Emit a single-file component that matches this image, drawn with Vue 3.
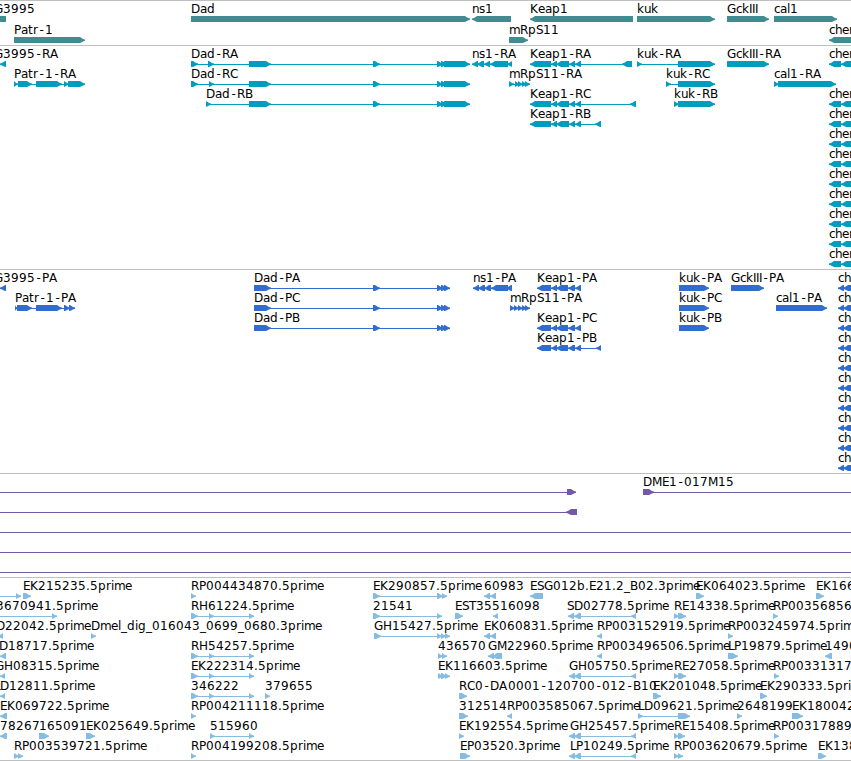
<template>
  <div class="browser">
    <section v-for="track in tracks" :key="track.name" class="track" :class="track.name">
      <svg class="canvas" width="851" :height="track.height">
        <g
          v-for="(f, i) in track.features"
          :key="i"
          :transform="`translate(0 ${f.row * track.pitch})`"
        >
          <rect
            v-if="f.line"
            class="shape"
            :x="f.line[0]"
            y="18"
            :width="f.line[1] - f.line[0]"
            height="1"
          />
          <path v-for="(e, j) in f.exons" :key="j" class="shape" :d="exonPath(e, f.strand)" />
          <text v-if="f.label" class="label" y="12" :x="charPositions(f.label, f.x)">{{ f.label }}</text>
        </g>
      </svg>
    </section>
  </div>
</template>

<script setup>
// advance width of each character, in whole pixels
const widths = {
  A: 9, B: 8, C: 8, D: 9, E: 7, G: 9, H: 9, I: 3, K: 8, L: 6, M: 10, P: 7, R: 8, S: 7, T: 7,
  a: 7, b: 8, c: 6, d: 8, e: 7, g: 8, h: 7, i: 3, k: 7, l: 3, m: 11, n: 7, p: 8, r: 5, s: 6, t: 5, u: 7,
  '-': 7, '.': 4, _: 6,
}

function charPositions(label, start) {
  let x = start
  return [...label]
    .map((c) => {
      // hyphens sit in the middle of their cell
      const pos = c === '-' ? x + 1.5 : x
      x += widths[c] || 8
      return pos
    })
    .join(' ')
}

function exonPath([a, b], strand) {
  const tip = Math.min(5, b - a)
  // s points from the tip back into the exon
  const s = strand < 0 ? 1 : -1
  const head = strand < 0 ? a : b
  const tail = strand < 0 ? b : a
  return `M${tail} 15H${head + s * tip}L${head + s * 2} 17L${head} 17.6V18.8L${head + s * 2} 19.4L${head + s * tip} 21H${tail}Z`
}

function feature(row, x, label, strand, exons) {
  const line = exons.length > 1 ? [exons[0][0], exons[exons.length - 1][1]] : null
  return { row, x, label, strand, exons, line }
}

const dadEnd = [[249, 271], [373, 380], [437, 443], [441, 447], [444, 470]]
const dadProtein = [[254, 271], [373, 380], [437, 443], [441, 447], [444, 450]]
const keap = [[530, 551], [551, 557], [556, 569], [569, 575], [575, 581]]
const keapProtein = [[537, 551], [551, 557], [556, 568], [568, 575], [575, 581]]
const dadEst = [[191, 198], [209, 214], [249, 254]]
const keapEst = [[569, 575], [574, 581], [631, 636]]

const genes = [
  feature(0, -14, 'CG3995', -1, [[-10, 6]]),
  feature(1, 14, 'Patr-1', 1, [[14, 85]]),
  feature(0, 191, 'Dad', 1, [[191, 470]]),
  feature(0, 472, 'ns1', -1, [[472, 511]]),
  feature(1, 509, 'mRpS11', 1, [[509, 528]]),
  feature(0, 530, 'Keap1', -1, [[530, 633]]),
  feature(0, 637, 'kuk', 1, [[637, 715]]),
  feature(0, 727, 'GckIII', 1, [[727, 769]]),
  feature(0, 774, 'cal1', 1, [[774, 837]]),
  feature(1, 829, 'cher', -1, [[829, 870]]),
]

const transcripts = [
  feature(0, -14, 'CG3995-RA', -1, [[0, 6]]),
  feature(1, 14, 'Patr-1-RA', 1, [[14, 18], [18, 32], [36, 62], [64, 69], [68, 85]]),
  feature(0, 191, 'Dad-RA', 1, [[191, 198], [208, 214], ...dadEnd]),
  feature(1, 191, 'Dad-RC', 1, [[191, 198], [209, 214], ...dadEnd]),
  feature(2, 206, 'Dad-RB', 1, [[206, 211], ...dadEnd]),
  feature(0, 472, 'ns1-RA', -1, [[472, 478], [477, 484], [484, 490], [490, 508], [507, 512]]),
  feature(1, 509, 'mRpS11-RA', 1, [[509, 514], [515, 520], [518, 523], [522, 527], [525, 530]]),
  feature(0, 530, 'Keap1-RA', -1, [...keap, [622, 632]]),
  feature(2, 530, 'Keap1-RC', -1, [...keap, [630, 636]]),
  feature(3, 530, 'Keap1-RB', -1, [...keap, [595, 601]]),
  feature(0, 637, 'kuk-RA', 1, [[637, 642], [678, 715]]),
  feature(1, 666, 'kuk-RC', 1, [[666, 671], [678, 715]]),
  feature(2, 674, 'kuk-RB', 1, [[674, 679], [678, 715]]),
  feature(0, 727, 'GckIII-RA', 1, [[727, 769]]),
  feature(1, 774, 'cal1-RA', 1, [[774, 779], [778, 836]]),
  ...[0, 2, 3, 4, 5, 6, 7, 8, 9, 10].map((row) =>
    feature(row, 829, 'cher', -1, [[829, 841], [841, 860]]),
  ),
]

const proteins = [
  feature(0, -14, 'CG3995-PA', -1, [[0, 6]]),
  feature(1, 15, 'Patr-1-PA', 1, [[15, 18], [17, 32], [36, 62], [64, 70], [69, 75]]),
  feature(0, 254, 'Dad-PA', 1, dadProtein),
  feature(1, 254, 'Dad-PC', 1, dadProtein),
  feature(2, 254, 'Dad-PB', 1, dadProtein),
  feature(0, 473, 'ns1-PA', -1, [[473, 479], [478, 485], [484, 491], [491, 508], [506, 512]]),
  feature(1, 510, 'mRpS11-PA', 1, [[510, 515], [514, 519], [518, 523], [522, 527], [525, 530]]),
  feature(0, 537, 'Keap1-PA', -1, keapProtein),
  feature(2, 537, 'Keap1-PC', -1, keapProtein),
  feature(3, 537, 'Keap1-PB', -1, [...keapProtein, [596, 601]]),
  feature(0, 679, 'kuk-PA', 1, [[679, 709]]),
  feature(1, 679, 'kuk-PC', 1, [[679, 709]]),
  feature(2, 679, 'kuk-PB', 1, [[679, 709]]),
  feature(0, 731, 'GckIII-PA', 1, [[731, 764]]),
  feature(1, 776, 'cal1-PA', 1, [[776, 827]]),
  ...[0, 1, 2, 3, 4, 5, 6, 7, 8, 9].map((row) =>
    feature(row, 838, 'ch', -1, [[838, 844], [843, 860]]),
  ),
]

const clones = [
  feature(0, 0, '', 1, [[-10, -5], [567, 576]]),
  feature(0, 643, 'DME1-017M15', 1, [[643, 654], [860, 870]]),
  feature(1, 0, '', -1, [[-10, -5], [566, 577]]),
  feature(2, 0, '', 1, [[-10, -5], [860, 870]]),
  feature(3, 0, '', 1, [[-10, -5], [860, 870]]),
  feature(4, 0, '', 1, [[-10, -5], [860, 870]]),
]

const ests = [
  feature(0, 0, '', 1, [[-10, -5], [16, 21]]),
  feature(0, 23, 'EK215235.5prime', 1, [[23, 31]]),
  feature(0, 191, 'RP004434870.5prime', 1, [[191, 196]]),
  feature(0, 373, 'EK290857.5prime', 1, [[373, 380], [437, 443], [442, 447]]),
  feature(0, 484, '60983', -1, [[484, 490], [490, 496]]),
  feature(0, 530, 'ESG012b.E21.2_B02.3prime', -1, [[530, 543]]),
  feature(0, 696, 'EK064023.5prime', 1, [[696, 704]]),
  feature(0, 816, 'EK166', 1, [[816, 824]]),

  feature(1, -35, 'RP003670941.5prime', 1, [[-10, -5], [52, 57]]),
  feature(1, 191, 'RH61224.5prime', 1, dadEst),
  feature(1, 373, '21541', 1, [[373, 380], [437, 442]]),
  feature(1, 455, 'EST35', 1, [[455, 463]]),
  feature(1, 492, '516098', -1, [[493, 498]]),
  feature(1, 567, 'SD02778.5prime', -1, [[568, 574], [574, 581], [631, 636]]),
  feature(1, 674, 'RE14338.5prime', 1, [[674, 679], [678, 686]]),
  feature(1, 773, 'RP00356856', 1, [[773, 778]]),

  feature(2, -10, 'LD22042.5prime', -1, [[-2, 3]]),
  feature(2, 91, 'Dmel_dig_016043_0699_0680.3prime', 1, [[91, 96]]),
  feature(2, 374, 'GH15427.5prime', 1, [[374, 381], [437, 442], [441, 446], [445, 450]]),
  feature(2, 484, 'EK060831.5prime', -1, [[484, 490], [490, 496]]),
  feature(2, 597, 'RP003152919.5prime', -1, [[597, 602]]),
  feature(2, 728, 'RP003245974.5prime', 1, [[728, 733]]),

  feature(3, -7, 'LD18717.5prime', -1, [[0, 6]]),
  feature(3, 191, 'RH54257.5prime', 1, dadEst),
  feature(3, 438, '436570', 1, [[438, 443], [442, 447]]),
  feature(3, 488, 'GM22960.5prime', -1, [[488, 494], [492, 502]]),
  feature(3, 597, 'RP003496506.5prime', -1, [[597, 602]]),
  feature(3, 728, 'LP19879.5prime', 1, [[728, 738]]),
  feature(3, 825, '1490', -1, [[825, 832]]),

  feature(4, -5, 'GH08315.5prime', -1, [[0, 5]]),
  feature(4, 191, 'EK222314.5prime', 1, dadEst),
  feature(4, 438, 'EK116603.5prime', 1, [[438, 443], [441, 447], [445, 450]]),
  feature(4, 569, 'GH05750.5prime', -1, keapEst),
  feature(4, 674, 'RE27058.5prime', 1, [[674, 679], [678, 686]]),
  feature(4, 773, 'RP00331317', 1, [[774, 779]]),

  feature(5, -6, 'LD12811.5prime', -1, [[0, 5]]),
  feature(5, 191, '346222', 1, dadEst),
  feature(5, 265, '379655', 1, [[265, 270]]),
  feature(5, 459, 'RC0-DA0001-120700-012-B10', 1, [[459, 467]]),
  feature(5, 653, 'EK201048.5prime', 1, [[653, 661]]),
  feature(5, 760, 'EK290333.5prime', 1, [[760, 767]]),

  feature(6, 0, 'EK069722.5prime', -1, [[0, 7]]),
  feature(6, 191, 'RP004211118.5prime', 1, [[191, 196]]),
  feature(6, 459, '312514', 1, [[459, 468]]),
  feature(6, 507, 'RP003585067.5prime', -1, [[507, 512]]),
  feature(6, 638, 'LD09621.5prime', 1, [[638, 643], [678, 690]]),
  feature(6, 737, '2648199', 1, [[737, 742]]),
  feature(6, 792, 'EK180042', 1, [[792, 803]]),

  feature(7, 0, '78267', -1, [[0, 7]]),
  feature(7, 39, '165091', 1, [[39, 49]]),
  feature(7, 86, 'EK025649.5prime', 1, [[86, 95]]),
  feature(7, 210, '515960', 1, [[210, 215], [249, 254]]),
  feature(7, 459, 'EK192554.5prime', 1, [[459, 464]]),
  feature(7, 570, 'GH25457.5prime', -1, keapEst),
  feature(7, 674, 'RE15408.5prime', 1, [[674, 679], [678, 685]]),
  feature(7, 773, 'RP00317889', 1, [[774, 779]]),

  feature(8, 14, 'RP003539721.5prime', 1, [[14, 19], [18, 23]]),
  feature(8, 191, 'RP004199208.5prime', 1, [[191, 196]]),
  feature(8, 460, 'EP03520.3prime', 1, [[460, 470]]),
  feature(8, 570, 'LP10249.5prime', -1, keapEst),
  feature(8, 674, 'RP003620679.5prime', 1, [[674, 679], [678, 683]]),
  feature(8, 818, 'EK138', 1, [[818, 826]]),
]

const tracks = [
  { name: 'genes', height: 44, pitch: 21, features: genes },
  { name: 'transcripts', height: 223, pitch: 20, features: transcripts },
  { name: 'proteins', height: 203, pitch: 20, features: proteins },
  { name: 'clones', height: 103, pitch: 20, features: clones },
  { name: 'ests', height: 182, pitch: 20, features: ests },
]
</script>

<style>
body {
  background: #fff;
}
</style>

<style scoped>
.browser {
  width: 851px;
  overflow: hidden;
  border-bottom: 1px solid #bfbfbf;
}

.track {
  border-top: 1px solid #bfbfbf;
}

.canvas {
  display: block;
}

.label {
  font-family: 'DejaVu Sans', sans-serif;
  font-size: 12px;
  fill: #000;
}

.genes .shape {
  fill: #408c91;
}

.transcripts .shape {
  fill: #009dbf;
}

.proteins .shape {
  fill: #316dce;
}

.clones .shape {
  fill: #7359a8;
}

.ests .shape {
  fill: #86bcdf;
}
</style>
